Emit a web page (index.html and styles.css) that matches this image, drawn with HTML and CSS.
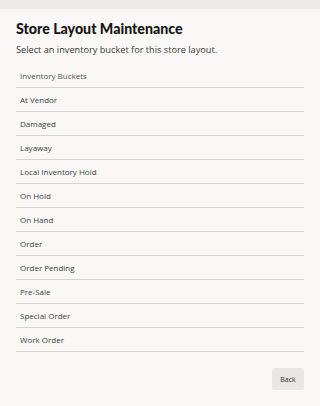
FILE: index.html
```html
<!DOCTYPE html>
<html>
<head>
<meta charset="utf-8">
<link rel="stylesheet" href="styles.css">
</head>
<body>
<div class="band"></div>
<main class="panel">
  <h1 class="title">Store Layout Maintenance</h1>
  <p class="subtitle">Select an inventory bucket for this store layout.</p>
  <ul class="list">
    <li class="row head">Inventory Buckets</li>
    <li class="row">At Vendor</li>
    <li class="row">Damaged</li>
    <li class="row">Layaway</li>
    <li class="row">Local Inventory Hold</li>
    <li class="row">On Hold</li>
    <li class="row">On Hand</li>
    <li class="row">Order</li>
    <li class="row">Order Pending</li>
    <li class="row">Pre-Sale</li>
    <li class="row">Special Order</li>
    <li class="row">Work Order</li>
  </ul>
  <div class="actions">
    <button class="btn">Back</button>
  </div>
</main>
</body>
</html>
```
FILE: styles.css
```css
html, body {
  margin: 0;
  padding: 0;
  background: #f9f8f7;
  font-family: "Open Sans", "Noto Sans", sans-serif;
}
.band {
  height: 9px;
  background: #ecebe9;
}
.panel {
  padding: 11px 16px 0 16px;
}
.title {
  margin: 0;
  font-family: Lato, "Open Sans", sans-serif;
  font-size: 14.2px;
  line-height: 18px;
  font-weight: 900;
  color: #161513;
}
.subtitle {
  margin: 4px 0 0 0;
  font-size: 9.2px;
  line-height: 16px;
  color: #3a3836;
}
.list {
  list-style: none;
  margin: 6px 0 0 0;
  padding: 0;
}
.row {
  height: 23px;
  line-height: 24px;
  border-bottom: 1px solid #d6d4d2;
  padding-left: 4px;
  font-size: 8px;
  color: #3f3d3b;
}
.row.head {
  color: #56534f;
}
.actions {
  display: flex;
  justify-content: flex-end;
  margin-top: 16px;
}
.btn {
  width: 32px;
  height: 22px;
  border: none;
  border-radius: 2px;
  background: #e8e7e5;
  color: #2f2d2b;
  font-family: inherit;
  font-size: 7px;
  padding: 0;
}
```
